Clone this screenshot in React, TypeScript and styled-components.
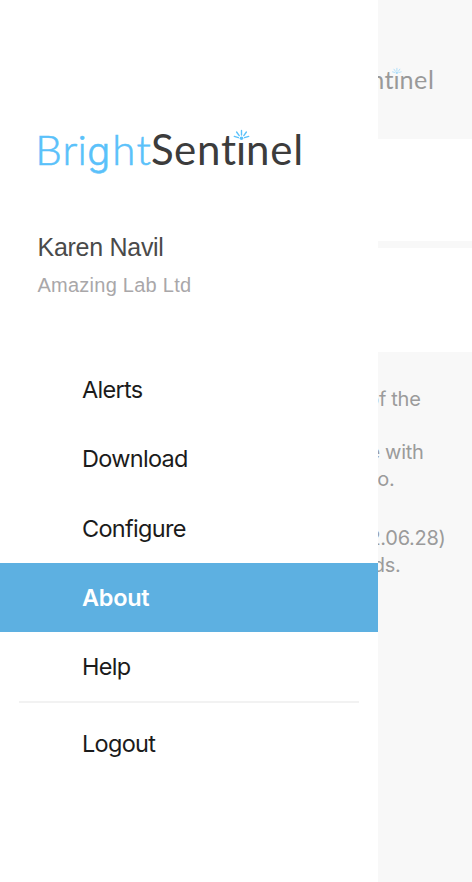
import React from "react";
import styled, { createGlobalStyle } from "styled-components";

const GlobalStyle = createGlobalStyle`
  * { box-sizing: border-box; }
  body { margin: 0; background: #fff; }
`;

const Screen = styled.div`
  display: flex;
  width: 472px;
  height: 882px;
  overflow: hidden;
  font-family: Inter, "Liberation Sans", sans-serif;
`;

const Drawer = styled.aside`
  flex: 0 0 377.5px;
  display: flex;
  flex-direction: column;
  background: #fff;
`;

const DrawerBrand = styled.div`
  height: 60px;
  margin: 125px 0 0 30px;
`;

const LogoSvg = styled.svg<{ $faded?: boolean }>`
  display: block;
  flex: none;
  opacity: ${(p) => (p.$faded ? 0.5 : 1)};
  font-family: Lato, sans-serif;
  font-size: 42px;
`;

const Account = styled.section`
  height: 170px;
  padding: 46px 0 0 37.5px;
  font-family: "Liberation Sans", Arial, sans-serif;
`;

const UserName = styled.div`
  font-size: 25px;
  line-height: 32px;
  letter-spacing: -0.28px;
  color: #4a4a4a;
`;

const Company = styled.div`
  margin-top: 6px;
  font-size: 20px;
  line-height: 32px;
  letter-spacing: 0.25px;
  color: #a9a7a9;
`;

const Menu = styled.nav`
  display: flex;
  flex-direction: column;
`;

const MenuItem = styled.a<{ $active?: boolean }>`
  display: flex;
  align-items: center;
  height: 69.3px;
  padding-left: 82px;
  font-size: 23.5px;
  letter-spacing: ${(p) => (p.$active ? "-0.3px" : "-0.7px")};
  font-weight: ${(p) => (p.$active ? 600 : 400)};
  color: ${(p) => (p.$active ? "#fff" : "#1b1b1b")};
  background: ${(p) => (p.$active ? "#5db0e1" : "transparent")};
`;

const Divider = styled.hr`
  width: 340px;
  height: 1.5px;
  margin: 0 0 6px 18.5px;
  border: 0;
  background: #f2f2f2;
`;

const Page = styled.main`
  flex: 1;
  min-width: 0;
  display: flex;
  flex-direction: column;
  overflow: hidden;
  background: #f8f8f8;
`;

const PageHeader = styled.header`
  display: flex;
  justify-content: flex-end;
  height: 139px;
  padding: 65px 36.5px 0 0;
`;

const Panel = styled.div<{ $height: number }>`
  height: ${(p) => p.$height}px;
  margin-bottom: 7px;
  background: #fff;
`;

const Copy = styled.div`
  padding-top: 27px;
`;

const Line = styled.div<{ $width: number; $gap?: number }>`
  display: flex;
  justify-content: flex-end;
  width: ${(p) => p.$width}px;
  margin-top: ${(p) => p.$gap ?? 0}px;
  overflow: hidden;
  font-size: 20px;
  letter-spacing: -0.3px;
  line-height: 26.5px;
  white-space: nowrap;
  color: #9b9b9b;
`;

function Logo({ scale = 1, faded }: { scale?: number; faded?: boolean }) {
  return (
    <LogoSvg
      $faded={faded}
      width={276 * scale}
      height={60 * scale}
      viewBox="0 0 276 60"
      role="img"
      aria-label="BrightSentinel"
    >
      <text y="39.6" fill="#5ac1fa" stroke="#5ac1fa" strokeWidth="0.6" fontWeight="300">
        <tspan x="5.2 32.4 47.5">Bri</tspan>
        <tspan x="57.2" fontFamily="Inter" fontSize="38">g</tspan>
        <tspan x="82.3 106.5">ht</tspan>
      </text>
      <text y="39.6" x="121 144 167 191 206 216 240.2 263.2" fill="#3c3c3c">
        Sentınel
      </text>
      <g stroke="#5ac1fa" strokeWidth="1.4" strokeLinecap="round">
        <path d="M211.5 10V5.5M209.2 10.6L206.6 7M213.8 10.6L216.4 7M208.4 12.6L204.3 11.4M214.6 12.6L218.7 11.4" />
        <circle cx="211.5" cy="13.2" r="1.8" fill="#5ac1fa" stroke="none" />
      </g>
    </LogoSvg>
  );
}

export default function App() {
  return (
    <>
      <GlobalStyle />
      <Screen>
        <Drawer>
          <DrawerBrand>
            <Logo />
          </DrawerBrand>
          <Account>
            <UserName>Karen Navil</UserName>
            <Company>Amazing Lab Ltd</Company>
          </Account>
          <Menu>
            <MenuItem>Alerts</MenuItem>
            <MenuItem>Download</MenuItem>
            <MenuItem>Configure</MenuItem>
            <MenuItem $active>About</MenuItem>
            <MenuItem>Help</MenuItem>
            <Divider />
            <MenuItem>Logout</MenuItem>
          </Menu>
        </Drawer>
        <Page>
          <PageHeader>
            <Logo scale={0.6} faded />
          </PageHeader>
          <Panel $height={102} />
          <Panel $height={104} />
          <Copy>
            <Line $width={43}>of the</Line>
            <Line $width={46} $gap={26.5}>e with</Line>
            <Line $width={17}>o.</Line>
            <Line $width={68} $gap={33}>2.06.28)</Line>
            <Line $width={23}>ds.</Line>
          </Copy>
        </Page>
      </Screen>
    </>
  );
}
